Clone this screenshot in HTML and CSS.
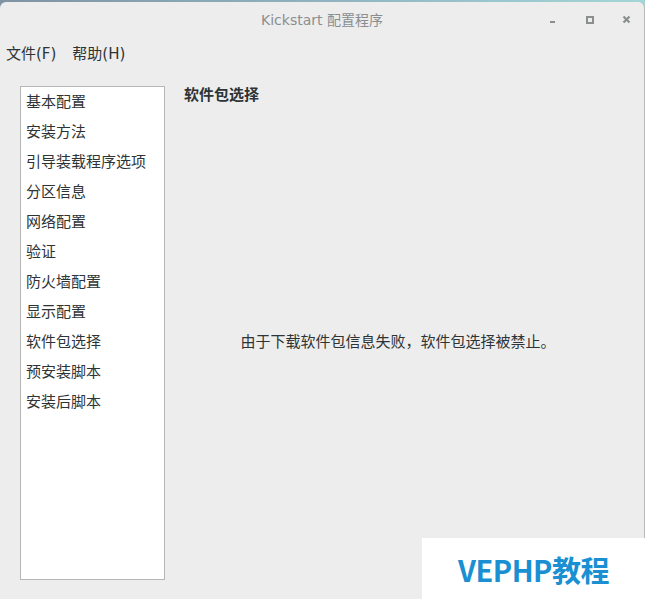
FILE: index.html
```html
<!DOCTYPE html>
<html lang="zh-CN">
<head>
  <meta charset="UTF-8">
  <title>Kickstart 配置程序</title>
  <link rel="stylesheet" href="styles.css">
</head>
<body>

  <div class="window">
      <div class="titlebar">
          <span class="title">Kickstart 配置程序</span>
          <div class="win-buttons">
              <span class="win-btn">
                  <svg width="12" height="12" viewBox="0 0 12 12"><rect x="3" y="8" width="5" height="2" fill="#8b8e8f"/></svg>
              </span>
              <span class="win-btn">
                  <svg width="12" height="12" viewBox="0 0 12 12"><rect x="3" y="4" width="6" height="6" fill="none" stroke="#8b8e8f" stroke-width="2"/></svg>
              </span>
              <span class="win-btn">
                  <svg width="12" height="12" viewBox="0 0 12 12"><path d="M2.5 3.5 L8.5 9.5 M8.5 3.5 L2.5 9.5" stroke="#8b8e8f" stroke-width="2.2"/></svg>
              </span>
          </div>
      </div>

      <div class="menubar">
          <span class="menu-item">文件(F)</span>
          <span class="menu-item">帮助(H)</span>
      </div>

      <div class="content">
          <ul class="sidebar">
              <li>基本配置</li>
              <li>安装方法</li>
              <li>引导装载程序选项</li>
              <li>分区信息</li>
              <li>网络配置</li>
              <li>验证</li>
              <li>防火墙配置</li>
              <li>显示配置</li>
              <li>软件包选择</li>
              <li>预安装脚本</li>
              <li>安装后脚本</li>
          </ul>

          <div class="main">
              <h2 class="page-title">软件包选择</h2>
              <div class="notice">
                  <p>由于下载软件包信息失败，软件包选择被禁止。</p>
              </div>
          </div>
      </div>
  </div>

  <div class="watermark">VEPHP教程</div>

</body>
</html>
```

FILE: styles.css
```css
body {
  margin: 0;
  padding: 0;
  height: 599px;
  overflow: hidden;
  background: linear-gradient(to right, #7f93a3, #8fb3c0 50%, #a3d6d8);
  font-family: "DejaVu Sans", "Noto Sans CJK SC", sans-serif;
  color: #2e3436;
  position: relative;
}

.window {
  margin-top: 2px;
  height: 597px;
  background: #ededed;
  border-radius: 6px 6px 0 0;
  border-right: 1px solid #b9b9b9;
  display: flex;
  flex-direction: column;
}

.titlebar {
  height: 36px;
  position: relative;
  display: flex;
  justify-content: center;
  align-items: center;
}

.title {
  font-size: 14px;
  color: #8b8e8f;
  margin-bottom: 3px;
}

.win-buttons {
  position: absolute;
  top: 11px;
  right: 11px;
  display: flex;
  gap: 25px;
}

.win-btn {
  width: 12px;
  height: 12px;
  display: block;
}

.win-btn svg {
  display: block;
}

.menubar {
  height: 28px;
  display: flex;
  align-items: center;
  gap: 16px;
  padding-left: 6px;
  font-size: 15px;
}

.content {
  flex: 1;
  display: flex;
  padding: 20px 13px 19px 20px;
  min-height: 0;
}

.sidebar {
  list-style: none;
  margin: 0;
  padding: 0;
  width: 145px;
  box-sizing: border-box;
  border: 1px solid #b6b6b6;
  background: #ffffff;
  font-size: 15px;
}

.sidebar li {
  height: 30px;
  line-height: 30px;
  padding-left: 5px;
}

.main {
  flex: 1;
  display: flex;
  flex-direction: column;
}

.page-title {
  margin: 0;
  padding-left: 19px;
  font-size: 15px;
  font-weight: bold;
  line-height: 19px;
}

.notice {
  flex: 1;
  display: flex;
  align-items: center;
  justify-content: center;
}

.notice p {
  margin: 0;
  font-size: 15px;
  padding-bottom: 4px;
}

.watermark {
  position: absolute;
  left: 422px;
  top: 538px;
  width: 223px;
  height: 61px;
  background: #ffffff;
  color: #1a8fd2;
  font-family: "Noto Sans CJK SC", "Noto Sans", sans-serif;
  font-size: 29px;
  font-weight: 600;
  display: flex;
  align-items: center;
  justify-content: center;
  letter-spacing: -0.5px;
}
```
